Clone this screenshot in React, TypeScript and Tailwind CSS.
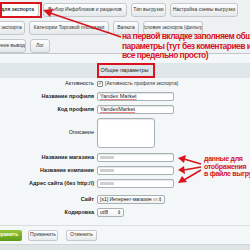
import { ReactNode } from "react";

const RED = "#d9141f";

type Tab = { label: string; w: number; active?: boolean };

const row1: Tab[] = [
  { label: "Общие для экспорта", w: 60, active: true },
  { label: "Выбор Инфоблоков и разделов", w: 84 },
  { label: "Тип выгрузки", w: 35 },
  { label: "Настройка схемы выгрузки", w: 68 },
];

const row2: Tab[] = [
  { label: "Параметры экспорта", w: 55 },
  { label: "Категории Торговой площадки", w: 80 },
  { label: "Валюта", w: 26 },
  { label: "Условия экспорта (фильтр)", w: 60 },
];

const row3: Tab[] = [
  { label: "Оформление вывода", w: 46 },
  { label: "Лог", w: 20 },
];

function TabRow({ tabs, offset }: { tabs: Tab[]; offset: string }) {
  return (
    <div className={`flex gap-[4px] h-[14px] ${offset}`}>
      {tabs.map((t) => (
        <div
          key={t.label}
          style={{ width: t.w }}
          className={`shrink-0 flex items-center rounded-[3px] border border-[#c2c8cb] text-[5px] text-[#333] whitespace-nowrap overflow-hidden ${
            t.active ? "bg-white font-bold justify-end pr-[4px]" : "bg-linear-to-b from-[#fefefe] to-[#e4e8ea] justify-center"
          }`}
        >
          {t.label}
        </div>
      ))}
    </div>
  );
}

function Row({ label, bold = true, children, h }: { label: string; bold?: boolean; children: ReactNode; h: string }) {
  return (
    <div className={`flex items-center ${h}`}>
      <div className={`w-[97px] pr-[3px] text-right text-[5.5px] text-[#222] whitespace-nowrap ${bold ? "font-bold" : ""}`}>
        {label}
      </div>
      {children}
    </div>
  );
}

function Input({ value, blurred, w = "w-[77px]" }: { value?: string; blurred?: boolean; w?: string }) {
  return (
    <div className={`${w} h-[9px] flex items-center rounded-[2px] border border-[#a7b1b6] bg-white shadow-[inset_0_1px_1px_rgba(0,0,0,0.1)] px-[2px] text-[5.5px] text-[#222]`}>
      {value && <span className="underline decoration-[#e88] decoration-[0.5px]">{value}</span>}
      {blurred && <span className="w-[14px] h-[3px] bg-[#cfcfcf] blur-[0.6px]" />}
    </div>
  );
}

function Select({ children, w }: { children: ReactNode; w: string }) {
  return (
    <div className={`${w} h-[9px] flex items-center justify-between rounded-[2px] border border-[#a7b1b6] bg-linear-to-b from-white to-[#eef0f1] px-[2px] text-[5px] text-[#222]`}>
      <span className="flex items-center gap-[2px] whitespace-nowrap overflow-hidden">{children}</span>
      <span className="text-[5px] leading-none">⇕</span>
    </div>
  );
}

export default function App() {
  return (
    <div className="relative w-[250px] h-[250px] overflow-hidden bg-[#eef1f2] font-['Liberation_Sans',Arial,sans-serif]">
      <div className="flex flex-col gap-[4px] pt-[3px]">
        <TabRow tabs={row1} offset="ml-[-21px]" />
        <TabRow tabs={row2} offset="ml-[-30px]" />
        <TabRow tabs={row3} offset="ml-[-20px]" />
      </div>

      <div className="border-t border-[#c2c8cb] bg-[#f4f7f8] pt-[9px]">
        <div className="h-[15px] bg-[#e0e7ea] flex items-center justify-center text-[5.5px] text-[#222] pr-[1px]">
          Общие параметры
        </div>

        <div className="flex flex-col">
          <Row label="Активность" bold={false} h="h-[11px]">
            <div className="flex items-center gap-[2px] text-[5px] text-[#333]">
              <span className="w-[6px] h-[6px] border border-[#888] rounded-[1px] bg-white flex items-center justify-center text-[5px] leading-none">✓</span>
              [Активность профиля экспорта]
            </div>
          </Row>
          <Row label="Название профиля" h="h-[13px] mt-[1px]">
            <Input value="Yandex Market" />
          </Row>
          <Row label="Код профиля" h="h-[13px]">
            <Input value="YandexMarket" />
          </Row>
          <Row label="Описание" bold={false} h="h-[31px] mt-[1px]">
            <div className="w-[58px] h-[30px] rounded-[3px] border border-[#a7b1b6] bg-white shadow-[inset_0_1px_1px_rgba(0,0,0,0.1)]" />
          </Row>
          <Row label="Название магазина" h="h-[13px] mt-[3px]">
            <Input blurred />
          </Row>
          <Row label="Название компании" h="h-[13px]">
            <Input blurred />
          </Row>
          <Row label="Адрес сайта (без http://)" h="h-[13px]">
            <Input blurred />
          </Row>
          <Row label="Сайт" h="h-[13px] mt-[3px]">
            <Select w="w-[68px]">
              [s1] Интернет-магазин
              <span className="w-[10px] h-[3px] bg-[#cfcfcf] blur-[0.5px]" />
            </Select>
          </Row>
          <Row label="Кодировка" h="h-[13px]">
            <Select w="w-[27px]">utf8</Select>
          </Row>
        </div>

        <div className="h-[6px]" />
        <div className="border-t border-[#d9dfe1] h-[19px] flex items-center gap-[6px] bg-[#f4f7f8]">
          <div className="ml-[-12px] w-[34px] h-[11px] rounded-[2px] bg-linear-to-b from-[#97c83a] to-[#5d9a16] text-white text-[5px] font-bold flex items-center justify-center">
            Сохранить
          </div>
          <div className="w-[30px] h-[11px] rounded-[2px] border border-[#c5cbce] bg-linear-to-b from-white to-[#e7ebed] text-[5px] text-[#333] flex items-center justify-center">
            Применить
          </div>
          <div className="ml-[2px] w-[31px] h-[11px] rounded-[2px] border border-[#c5cbce] bg-linear-to-b from-white to-[#e7ebed] text-[5px] text-[#333] flex items-center justify-center">
            Отменить
          </div>
        </div>
        <div className="h-[10px] border-t border-[#cfd6d9] bg-[#dfe5e7]" />
      </div>

      {/* red annotations */}
      <div className="absolute left-0 top-[2px] w-[42px] h-[16px] border-2 border-[#d9141f]" />
      <div className="absolute left-[97px] top-[63px] w-[58px] h-[15px] border-2 border-[#d9141f]" />

      <div
        className="absolute left-[122px] top-[32px] whitespace-nowrap font-bold text-[8.5px] leading-[9.5px] tracking-[-0.55px]"
        style={{ color: RED }}
      >
        на первой вкладке заполняем общие
        <br />
        параметры (тут без коментариев и так
        <br />
        все предельно просто)
      </div>

      <div
        className="absolute left-[204px] top-[155px] whitespace-nowrap font-bold text-[7px] leading-[7.5px] tracking-[-0.3px]"
        style={{ color: RED }}
      >
        данные для
        <br />
        отображения
        <br />
        в файле выгрузки
      </div>

      <svg className="absolute inset-0 pointer-events-none" width="250" height="250">
        <g stroke={RED} strokeWidth="1.6" fill={RED}>
          <line x1="121" y1="37" x2="50" y2="13" />
          <polygon points="43,10 53,9 50,17" stroke="none" />
          <line x1="201" y1="164" x2="184" y2="159" />
          <polygon points="178,158 186,155 184,163" stroke="none" />
          <line x1="201" y1="167" x2="184" y2="170" />
          <polygon points="178,170 184,166 185,174" stroke="none" />
          <line x1="201" y1="170" x2="184" y2="180" />
          <polygon points="178,183 182,176 187,182" stroke="none" />
        </g>
      </svg>
    </div>
  );
}
